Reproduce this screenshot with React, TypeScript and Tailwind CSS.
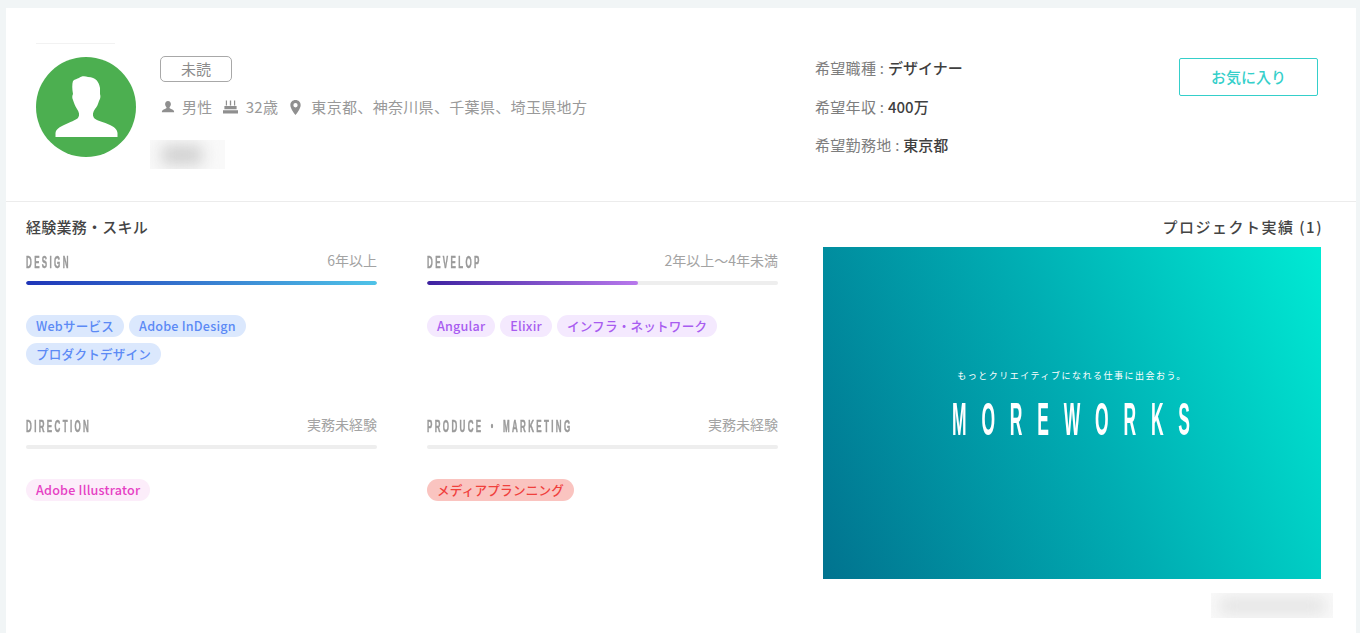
const font = { fontFamily: '"Noto Sans CJK JP", "Noto Sans", sans-serif' };

type Skill = {
  title: string;
  years: string;
  fill: string;
  tag: string;
  tags: string[];
};

const skills: Skill[] = [
  {
    title: "DESIGN",
    years: "6年以上",
    fill: "w-full bg-[linear-gradient(to_right,#1f35b8,#4fc3e8)]",
    tag: "bg-[#dbe8fd] text-[#5c8af5]",
    tags: ["Webサービス", "Adobe InDesign", "プロダクトデザイン"],
  },
  {
    title: "DEVELOP",
    years: "2年以上〜4年未満",
    fill: "w-[60%] bg-[linear-gradient(to_right,#3d22a0,#b878ec)]",
    tag: "bg-[#f4e9fe] text-[#a85cf0]",
    tags: ["Angular", "Elixir", "インフラ・ネットワーク"],
  },
  {
    title: "DIRECTION",
    years: "実務未経験",
    fill: "w-0",
    tag: "bg-[#fcedfa] text-[#e640c4]",
    tags: ["Adobe Illustrator"],
  },
  {
    title: "PRODUCE ・ MARKETING",
    years: "実務未経験",
    fill: "w-0",
    tag: "bg-[#fac4c0] text-[#f0403c]",
    tags: ["メディアプランニング"],
  },
];

function SkillCell({ s }: { s: Skill }) {
  return (
    <div className="h-[164px]">
      <div className="flex h-[20px] items-center justify-between">
        <div className="w-0 grow">
          <span
            className="inline-block origin-left scale-x-[0.5] whitespace-nowrap text-[16px] font-bold tracking-[4.7px] text-[#9a9a9a] [-webkit-text-stroke:0.5px_#9a9a9a]"
            style={{ fontFamily: '"Liberation Sans", "Noto Sans CJK JP", sans-serif' }}
          >
            {s.title}
          </span>
        </div>
        <span className="shrink-0 whitespace-nowrap pb-[5px] text-[14px] leading-none text-[#a3a3a3]">{s.years}</span>
      </div>
      <div className="mt-[9px] h-[4px] overflow-hidden rounded-full bg-[#eeeeee]">
        <div className={`h-full rounded-full ${s.fill}`} />
      </div>
      <div className="mt-[30px] flex flex-wrap gap-x-[5px] gap-y-[6px]">
        {s.tags.map((t) => (
          <span
            key={t}
            className={`flex h-[22px] items-center rounded-full px-[10px] text-[12.6px] font-medium tracking-[0.2px] ${s.tag}`}
          >
            {t}
          </span>
        ))}
      </div>
    </div>
  );
}

function Blur({ className, blob }: { className: string; blob: string }) {
  return (
    <div className={`flex items-center overflow-hidden bg-[#f9f9f9] ${className}`}>
      <div className={blob} />
    </div>
  );
}

function Meta({ label, value }: { label: string; value: string }) {
  return (
    <div className="h-[38.5px] text-[15px] leading-[20px]">
      <span className="tracking-[0.3px] text-[#7d7d7d]">{label} : </span>
      <span className="font-medium text-[#3f3f3f]">{value}</span>
    </div>
  );
}

export default function App() {
  return (
    <div className="h-[633px] overflow-hidden bg-[#f1f5f6] pl-[6px] pr-[4px] pt-[8px]" style={font}>
      <div className="h-[625px] bg-white">
        <header className="flex h-[194px] border-b border-[#ececec] pl-[30px]">
          <div className="w-[80px] shrink-0 pt-[35px]">
            <div className="h-px w-[79px] bg-[#f2f2f2]" />
          </div>
          <div className="-ml-[80px] mt-[49px] h-[100px] w-[100px] shrink-0">
            <svg viewBox="0 0 100 100" className="h-[100px] w-[100px]">
              <circle cx="50" cy="50" r="50" fill="#4caf50" />
              <path
                d="M19.500 80 L19.500 76 C20 72 24 70 28 68 C34 65 40 63 42 61 C44 58 43 55 41 52 C39 49 38 46 37 43 C36 41 36 39 37 37 C36 32 36 27 37 24 C39 22 41 22 43 21 C45 19 49 19 52 20 C60 20 63 25 64 31 L64 37 C65 40 64 42 63 44 C62 47 61 50 59 52 C57 55 56 58 58 61 C61 64 68 65 74 68 C78 70 81 72 81.500 76 L81.500 80 Z"
                fill="#fff"
              />
            </svg>
          </div>
          <div className="ml-[24px] w-[655px] shrink-0 pt-[48px]">
            <span className="flex h-[26px] w-[72px] items-center justify-center rounded-[5px] border border-[#a8a8a8] text-[15px] text-[#8c8c8c]">
              未読
            </span>
            <div className="mt-[13px] flex h-[24px] items-center text-[15px] tracking-[0.33px] text-[#999999]">
              <svg viewBox="0 0 16 16" className="ml-px mr-[7px] h-[14px] w-[14px]" fill="#8f8f8f">
                <path d="M8 1c2.200 0 3.300 1.700 3.300 3.700 0 1.500-.6 2.800-1.500 3.600-.3.600-.1 1.200.6 1.500l3.100 1.300c1 .5 1.500 1.300 1.500 2.900H1c0-1.600.5-2.400 1.500-2.900l3.100-1.300c.7-.3.9-.9.6-1.500C5.300 7.500 4.700 6.200 4.700 4.700 4.700 2.700 5.800 1 8 1z" />
              </svg>
              <span>男性</span>
              <svg viewBox="0 0 16 16" className="ml-[10px] mr-[8px] h-[16px] w-[15px]" fill="#8f8f8f">
                <path d="M3 1h1.300v5.500H3zM7.300 1h1.400v5.500H7.300zM11.700 1H13v5.500h-1.300zM1.500 7H14.500v3.500H1.500zM0 11.500h16V15H0z" />
              </svg>
              <span>32歳</span>
              <svg viewBox="0 0 16 16" className="ml-[10px] mr-[8px] h-[15px] w-[15px]" fill="#8f8f8f">
                <path
                  fillRule="evenodd"
                  d="M8 0c3.300 0 5.500 2.400 5.500 5.500C13.500 9.300 8 16 8 16S2.500 9.300 2.500 5.500C2.500 2.400 4.700 0 8 0zm0 3.300a2.300 2.300 0 100 4.600 2.300 2.300 0 000-4.600z"
                />
              </svg>
              <span>東京都、神奈川県、千葉県、埼玉県地方</span>
            </div>
            <Blur
              className="-ml-[10px] mt-[21px] h-[29px] w-[75px]"
              blob="ml-[12px] h-[18px] w-[40px] bg-[#cccccc] blur-[8px]"
            />
          </div>
          <div className="w-[364px] shrink-0 pt-[50px]">
            <Meta label="希望職種" value="デザイナー" />
            <Meta label="希望年収" value="400万" />
            <Meta label="希望勤務地" value="東京都" />
          </div>
          <div className="pt-[50px]">
            <button className="flex h-[38px] w-[139px] items-center justify-center rounded-[2px] border border-[#35cfca] text-[15px] font-medium text-[#35cfca]">
              お気に入り
            </button>
          </div>
        </header>

        <div className="flex">
          <section className="w-[772px] shrink-0 pl-[20px]">
            <h2 className="mt-[15px] text-[15px] font-medium leading-[20px] tracking-[0.25px] text-[#444444]">
              経験業務・スキル
            </h2>
            <div className="mt-[15px] grid grid-cols-[351px_351px] gap-x-[50px]">
              {skills.map((s) => (
                <SkillCell key={s.title} s={s} />
              ))}
            </div>
          </section>
          <section className="w-[500px] shrink-0 pl-[45px]">
            <h2 className="mt-[15px] w-[500px] whitespace-nowrap text-right text-[15px] font-medium leading-[20px] tracking-[1.5px] text-[#444444]">
              プロジェクト実績 (1)
            </h2>
            <div className="mt-[10px] flex h-[332px] w-[498px] flex-col items-center bg-[linear-gradient(66deg,#01738f,#00aeb3_52%,#00ead4)] pt-[122px] text-white">
              <div className="text-[9px] leading-[14px] tracking-[1.5px]">
                もっとクリエイティブになれる仕事に出会おう。
              </div>
              <div className="mt-[14px] h-[44px] w-[241px] overflow-visible">
                <span
                  className="inline-block origin-left scale-x-[0.38] whitespace-nowrap text-[46px] font-bold leading-[44px] tracking-[39px]"
                  style={{ fontFamily: '"Liberation Sans", sans-serif' }}
                >
                  MOREWORKS
                </span>
              </div>
            </div>
            <div className="flex w-[510px] justify-end">
              <Blur
                className="mt-[14px] h-[25px] w-[122px] justify-center"
                blob="h-[14px] w-[105px] bg-[#e0e0e0] blur-[8px]"
              />
            </div>
          </section>
        </div>
      </div>
    </div>
  );
}
